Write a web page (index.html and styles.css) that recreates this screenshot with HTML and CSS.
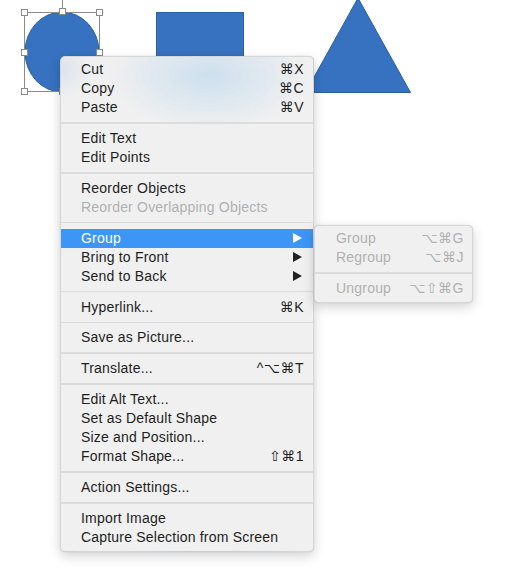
FILE: index.html
```html
<!DOCTYPE html>
<html>
<head>
<meta charset="utf-8">
<link rel="stylesheet" href="styles.css">
</head>
<body>
<div class="canvas">
  <svg class="shapes" width="525" height="571" viewBox="0 0 525 571">
    <ellipse cx="62" cy="52" rx="37" ry="40" fill="#3672c0" stroke="#2d5f9f" stroke-width="1"/>
    <rect x="156.5" y="12.5" width="87" height="90" fill="#3672c0" stroke="#2d5f9f" stroke-width="1"/>
    <polygon points="358,-2 410.5,92.5 305.5,92.5" fill="#3672c0" stroke="#2d5f9f" stroke-width="1"/>
    <line x1="62.5" y1="0" x2="62.5" y2="9" stroke="#8a8a8a" stroke-width="1"/>
    <rect x="24.5" y="12.5" width="75" height="79" fill="none" stroke="#8a8a8a" stroke-width="1"/>
    <g fill="#ffffff" stroke="#8a8a8a" stroke-width="1">
      <rect x="21.5" y="9.5" width="6" height="6"/>
      <rect x="59.5" y="8.5" width="6" height="6"/>
      <rect x="96.5" y="9.5" width="6" height="6"/>
      <rect x="21.5" y="49.5" width="6" height="6"/>
      <rect x="96.5" y="49.5" width="6" height="6"/>
      <rect x="21.5" y="88.5" width="6" height="6"/>
      <rect x="59.5" y="88.5" width="6" height="6"/>
      <rect x="96.5" y="88.5" width="6" height="6"/>
    </g>
  </svg>

  <div class="menu main-menu">
    <div class="item"><span class="label">Cut</span><span class="key">⌘X</span></div>
    <div class="item"><span class="label">Copy</span><span class="key">⌘C</span></div>
    <div class="item"><span class="label">Paste</span><span class="key">⌘V</span></div>
    <div class="sep"></div>
    <div class="item"><span class="label">Edit Text</span></div>
    <div class="item"><span class="label">Edit Points</span></div>
    <div class="sep"></div>
    <div class="item"><span class="label">Reorder Objects</span></div>
    <div class="item disabled"><span class="label">Reorder Overlapping Objects</span></div>
    <div class="sep"></div>
    <div class="item active"><span class="label">Group</span><span class="arrow"></span></div>
    <div class="item"><span class="label">Bring to Front</span><span class="arrow"></span></div>
    <div class="item"><span class="label">Send to Back</span><span class="arrow"></span></div>
    <div class="sep"></div>
    <div class="item"><span class="label">Hyperlink...</span><span class="key">⌘K</span></div>
    <div class="sep"></div>
    <div class="item"><span class="label">Save as Picture...</span></div>
    <div class="sep"></div>
    <div class="item"><span class="label">Translate...</span><span class="key">^⌥⌘T</span></div>
    <div class="sep"></div>
    <div class="item"><span class="label">Edit Alt Text...</span></div>
    <div class="item"><span class="label">Set as Default Shape</span></div>
    <div class="item"><span class="label">Size and Position...</span></div>
    <div class="item"><span class="label">Format Shape...</span><span class="key">⇧⌘1</span></div>
    <div class="sep"></div>
    <div class="item"><span class="label">Action Settings...</span></div>
    <div class="sep"></div>
    <div class="item"><span class="label">Import Image</span></div>
    <div class="item"><span class="label">Capture Selection from Screen</span></div>
  </div>

  <div class="menu sub-menu">
    <div class="item disabled"><span class="label">Group</span><span class="key">⌥⌘G</span></div>
    <div class="item disabled"><span class="label">Regroup</span><span class="key">⌥⌘J</span></div>
    <div class="sep"></div>
    <div class="item disabled"><span class="label">Ungroup</span><span class="key">⌥⇧⌘G</span></div>
  </div>
</div>
</body>
</html>
```

FILE: styles.css
```css
html, body {
  margin: 0;
  padding: 0;
  background: #ffffff;
}

.canvas {
  position: relative;
  width: 525px;
  height: 571px;
  overflow: hidden;
  font-family: "Liberation Sans", "DejaVu Sans", sans-serif;
  font-size: 14px;
  color: #1e1e1e;
}

.shapes {
  position: absolute;
  left: 0;
  top: 0;
}

.menu {
  position: absolute;
  box-sizing: border-box;
  display: flex;
  flex-direction: column;
  padding: 4px 0;
  border-radius: 5px;
  border: 1px solid rgba(0, 0, 0, 0.1);
  box-shadow: 0 4px 12px rgba(0, 0, 0, 0.18), 0 0 1px rgba(0, 0, 0, 0.2);
}

.main-menu {
  left: 60px;
  top: 56px;
  width: 254px;
  height: 496px;
  padding-top: 3px;
  background:
    radial-gradient(ellipse 100px 55px at 148px 18px, rgba(196, 220, 238, 0.8), rgba(196, 220, 238, 0) 100%),
    radial-gradient(ellipse 30px 30px at 0px 12px, rgba(200, 215, 232, 0.5), rgba(200, 215, 232, 0) 100%),
    #f0f0f0;
}

.sub-menu {
  left: 314px;
  top: 225px;
  width: 159px;
  padding-top: 3px;
  background: #f0f0f0;
}

.item {
  display: flex;
  align-items: center;
  justify-content: space-between;
  height: 19px;
  line-height: 19px;
  padding: 0 9px 0 20px;
  white-space: nowrap;
}

.label {
  letter-spacing: 0.2px;
}

.sub-menu .item {
  padding: 0 8px 0 21px;
}

.item.disabled {
  color: #b0b0b0;
}

.item.active {
  background: #3d96f5;
  color: #ffffff;
}

.key {
  letter-spacing: 0.5px;
}

.arrow {
  width: 0;
  height: 0;
  margin-right: 2px;
  border-top: 5px solid transparent;
  border-bottom: 5px solid transparent;
  border-left: 9px solid #222222;
}

.item.active .arrow {
  border-left-color: #ffffff;
}

.sep {
  height: 2px;
  margin: 5px 0 5.25px;
  background: #dcdcdc;
}
```
